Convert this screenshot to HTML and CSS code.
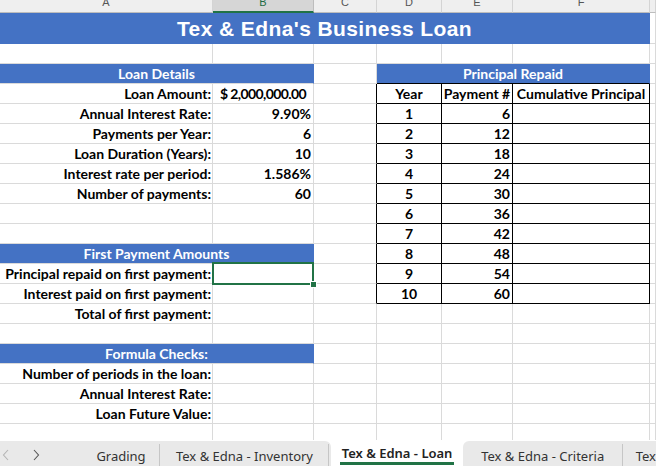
FILE: index.html
```html
<!DOCTYPE html>
<html>
<head>
<meta charset="utf-8">
<link rel="stylesheet" href="styles.css">
</head>
<body>
<div class="sheet">
  <!-- row 1: column headers -->
  <div class="h">A</div><div class="h hsel">B</div><div class="h">C</div><div class="h">D</div><div class="h">E</div><div class="h">F</div><div class="h"></div>
  <!-- row 2: title -->
  <div class="c title span6">Tex &amp; Edna's Business Loan</div><div class="c"></div>
  <!-- row 3 -->
  <div class="c"></div><div class="c"></div><div class="c"></div><div class="c"></div><div class="c"></div><div class="c"></div><div class="c"></div>
  <!-- row 4 -->
  <div class="c blue span2">Loan Details</div><div class="c"></div><div class="c blue span3 tbhead">Principal Repaid</div><div class="c"></div>
  <!-- row 5 -->
  <div class="c lbl">Loan Amount:</div><div class="c acct"><span>$</span><span class="amt">2,000,000.00</span></div><div class="c tl"></div><div class="c tb ctr">Year</div><div class="c tb ctr">Payment #</div><div class="c tb ctr">Cumulative Principal</div><div class="c"></div>
  <!-- row 6 -->
  <div class="c lbl">Annual Interest Rate:</div><div class="c val">9.90%</div><div class="c tl"></div><div class="c tb ctr">1</div><div class="c tb num">6</div><div class="c tb"></div><div class="c"></div>
  <!-- row 7 -->
  <div class="c lbl">Payments per Year:</div><div class="c val">6</div><div class="c tl"></div><div class="c tb ctr">2</div><div class="c tb num">12</div><div class="c tb"></div><div class="c"></div>
  <!-- row 8 -->
  <div class="c lbl">Loan Duration (Years):</div><div class="c val">10</div><div class="c tl"></div><div class="c tb ctr">3</div><div class="c tb num">18</div><div class="c tb"></div><div class="c"></div>
  <!-- row 9 -->
  <div class="c lbl">Interest rate per period:</div><div class="c val">1.586%</div><div class="c tl"></div><div class="c tb ctr">4</div><div class="c tb num">24</div><div class="c tb"></div><div class="c"></div>
  <!-- row 10 -->
  <div class="c lbl">Number of payments:</div><div class="c val">60</div><div class="c tl"></div><div class="c tb ctr">5</div><div class="c tb num">30</div><div class="c tb"></div><div class="c"></div>
  <!-- row 11 -->
  <div class="c"></div><div class="c"></div><div class="c tl"></div><div class="c tb ctr">6</div><div class="c tb num">36</div><div class="c tb"></div><div class="c"></div>
  <!-- row 12 -->
  <div class="c"></div><div class="c"></div><div class="c tl"></div><div class="c tb ctr">7</div><div class="c tb num">42</div><div class="c tb"></div><div class="c"></div>
  <!-- row 13 -->
  <div class="c blue span2">First Payment Amounts</div><div class="c tl"></div><div class="c tb ctr">8</div><div class="c tb num">48</div><div class="c tb"></div><div class="c"></div>
  <!-- row 14 -->
  <div class="c lbl">Principal repaid on first payment:</div><div class="c selcell"><div class="selbox"><div class="handle"></div></div></div><div class="c tl"></div><div class="c tb ctr">9</div><div class="c tb num">54</div><div class="c tb"></div><div class="c"></div>
  <!-- row 15 -->
  <div class="c lbl">Interest paid on first payment:</div><div class="c"></div><div class="c tl"></div><div class="c tb ctr">10</div><div class="c tb num">60</div><div class="c tb"></div><div class="c"></div>
  <!-- row 16 -->
  <div class="c lbl">Total of first payment:</div><div class="c"></div><div class="c"></div><div class="c"></div><div class="c"></div><div class="c"></div><div class="c"></div>
  <!-- row 17 -->
  <div class="c"></div><div class="c"></div><div class="c"></div><div class="c"></div><div class="c"></div><div class="c"></div><div class="c"></div>
  <!-- row 18 -->
  <div class="c blue span2">Formula Checks:</div><div class="c"></div><div class="c"></div><div class="c"></div><div class="c"></div><div class="c"></div>
  <!-- row 19 -->
  <div class="c lbl">Number of periods in the loan:</div><div class="c"></div><div class="c"></div><div class="c"></div><div class="c"></div><div class="c"></div><div class="c"></div>
  <!-- row 20 -->
  <div class="c lbl">Annual Interest Rate:</div><div class="c"></div><div class="c"></div><div class="c"></div><div class="c"></div><div class="c"></div><div class="c"></div>
  <!-- row 21 -->
  <div class="c lbl">Loan Future Value:</div><div class="c"></div><div class="c"></div><div class="c"></div><div class="c"></div><div class="c"></div><div class="c"></div>
  <!-- row 22 -->
  <div class="c"></div><div class="c"></div><div class="c"></div><div class="c"></div><div class="c"></div><div class="c"></div><div class="c"></div>
</div>

<div class="tabbar">
  <div class="tabs-left">
    <div class="arrows">
      <svg class="arrow" width="8" height="12" viewBox="0 0 8 12"><polyline points="6,1 1.5,6 6,11" fill="none" stroke="#b4b4b4" stroke-width="1.1"/></svg>
      <svg class="arrow arrow-next" width="8" height="12" viewBox="0 0 8 12"><polyline points="2,1 6.5,6 2,11" fill="none" stroke="#555" stroke-width="1.1"/></svg>
    </div>
    <div class="tab tab-grading">Grading</div>
    <div class="tab tab-inv">Tex &amp; Edna - Inventory</div>
  </div>
  <div class="tab-active"><span class="active-label">Tex &amp; Edna - Loan</span></div>
  <div class="tabs-right">
    <div class="tab tab-crit">Tex &amp; Edna - Criteria</div>
    <div class="tab tab-more">Tex</div>
  </div>
</div>
</body>
</html>
```

FILE: styles.css
```css
html, body {
  margin: 0;
  padding: 0;
  background: #ffffff;
  overflow: hidden;
}

body {
  width: 656px;
  height: 466px;
}

.sheet {
  display: grid;
  grid-template-columns: 213px 101px 63px 65px 71px 137px 6px;
  grid-template-rows: 13px 31px repeat(20, 20px);
  height: 440px;
  overflow: hidden;
  font-family: Lato, "Liberation Sans", sans-serif;
  font-weight: 700;
  font-size: 14px;
  color: #000;
}

/* column headers */
.h {
  box-sizing: border-box;
  background: #efefef;
  border-right: 1px solid #d4d4d4;
  border-bottom: 1px solid #bdbdbd;
  font-family: "Liberation Sans", Arial, sans-serif;
  font-weight: 400;
  font-size: 11px;
  color: #555;
  text-align: center;
  display: flex;
  justify-content: center;
  align-items: flex-end;
  padding-bottom: 5px;
  line-height: 10px;
  overflow: hidden;
}

.hsel {
  background: #d6d6d6;
  border-right-color: #bdbdbd;
  border-bottom: 2px solid #217346;
  padding-bottom: 4px;
  color: #1e6b43;
}

/* cells */
.c {
  box-sizing: border-box;
  border-right: 1px solid #dadada;
  border-bottom: 1px solid #dadada;
  line-height: 19px;
  white-space: nowrap;
  position: relative;
}

.span2 { grid-column: span 2; }
.span3 { grid-column: span 3; }
.span6 { grid-column: span 6; }

.title {
  background: #4472c4;
  border-color: #4472c4;
  color: #ffffff;
  font-family: "Liberation Sans", Arial, sans-serif;
  font-weight: 700;
  font-size: 21px;
  letter-spacing: 0.4px;
  line-height: 31px;
  text-align: center;
  border-bottom: none;
}

.blue {
  background: #4472c4;
  color: #ffffff;
  text-align: center;
  border-right-color: #4472c4;
  border-bottom-color: #dadada;
}

.tbhead {
  border-bottom-color: #000;
  border-right-color: #4472c4;
}

.lbl {
  text-align: right;
  padding-right: 1px;
}

.val {
  text-align: right;
  padding-right: 2px;
}

.acct {
  display: flex;
  justify-content: space-between;
  padding: 0 7px 0 7px;
}

.amt {
  letter-spacing: -0.6px;
}

.tl {
  border-right-color: #000;
}

.tb {
  border-right-color: #000;
  border-bottom-color: #000;
}

.ctr { text-align: center; }

.num {
  text-align: right;
  padding-right: 2px;
}

/* selected cell */
.selbox {
  position: absolute;
  top: -2px;
  left: -1px;
  right: -1px;
  bottom: -2px;
  border: 2px solid #217346;
  z-index: 2;
}

.handle {
  position: absolute;
  right: -5px;
  bottom: -5px;
  width: 5px;
  height: 5px;
  background: #217346;
  border: 1px solid #ffffff;
}

/* tab bar */
.tabbar {
  display: flex;
  height: 26px;
  background: #ffffff;
  font-family: "Noto Sans", "Open Sans", sans-serif;
  font-size: 13px;
  color: #333;
}

.tabs-left {
  display: flex;
  width: 333px;
  margin-top: 1px;
  background: #e9e9e9;
  border-top-right-radius: 6px;
}

.arrows {
  width: 82px;
  display: flex;
  align-items: center;
  padding-left: 2px;
  box-sizing: border-box;
  padding-top: 3px;
}

.arrow-next {
  margin-left: 22px;
}

.tab {
  box-sizing: border-box;
  display: flex;
  justify-content: center;
  align-items: center;
  padding-top: 5px;
  white-space: nowrap;
  position: relative;
}

.tab::after {
  content: "";
  position: absolute;
  right: 0;
  top: 3px;
  bottom: 0;
  width: 1px;
  background: #c6c6c6;
}

.tab-grading { width: 78px; }
.tab-inv { width: 169px; }

.tab-active {
  width: 132px;
  display: flex;
  justify-content: center;
  padding-top: 4px;
  box-sizing: border-box;
}

.active-label {
  font-weight: 600;
  color: #222;
  border-bottom: 3px solid #217346;
  height: 21px;
  line-height: 18px;
  box-sizing: border-box;
  padding: 0 2px;
}

.tabs-right {
  flex: 1;
  display: flex;
  margin-top: 1px;
  background: #e9e9e9;
  border-top-left-radius: 6px;
}

.tab-crit { width: 160px; }

.tab-more {
  justify-content: flex-start;
  padding-left: 13px;
  flex: 1;
}

.tab-more::after { display: none; }
```
